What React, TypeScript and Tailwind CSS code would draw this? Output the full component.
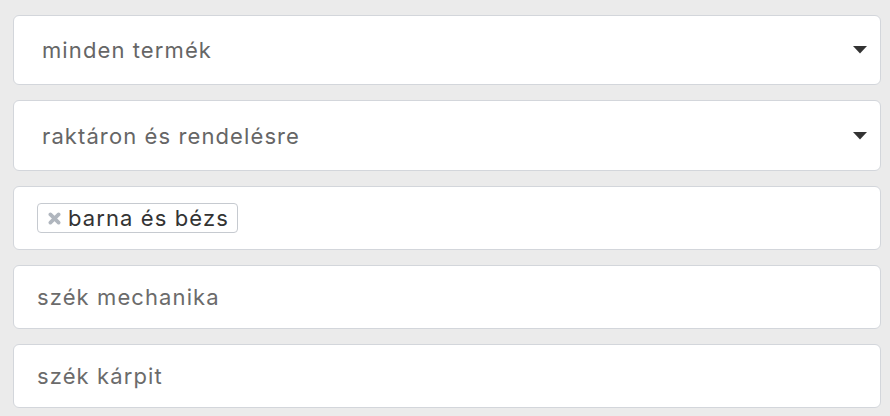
import React from "react";

function Caret() {
  return (
    <svg width="14" height="8" viewBox="0 0 14 8" className="shrink-0">
      <path d="M0 0 H14 L7 7.5 Z" fill="#333333" />
    </svg>
  );
}

function SelectBox({ label, h }: { label: string; h: string }) {
  return (
    <div
      className={`flex items-center justify-between rounded-[6px] border border-[#d3d6db] bg-white pl-[28px] pr-[13px] ${h}`}
    >
      <span className="text-[22px] leading-none tracking-[1.1px] text-[#666666]">{label}</span>
      <Caret />
    </div>
  );
}

function InputBox({ label }: { label: string }) {
  return (
    <div className="flex h-[64px] items-center rounded-[6px] border border-[#d3d6db] bg-white pl-[23px]">
      <span className="text-[22px] leading-none tracking-[1.1px] text-[#6b6b6b]">{label}</span>
    </div>
  );
}

export default function App() {
  return (
    <div
      className="min-h-[416px] w-full bg-[#ebebeb] pt-[15px] pl-[13px] pr-[9px]"
      style={{ fontFamily: "Inter, 'Noto Sans', sans-serif" }}
    >
      <div className="flex flex-col gap-[15px]">
        <SelectBox label="minden termék" h="h-[70px]" />
        <SelectBox label="raktáron és rendelésre" h="h-[71px]" />
        <div className="flex h-[64px] items-center rounded-[6px] border border-[#d3d6db] bg-white pl-[23px]">
          <span className="flex h-[30px] items-center gap-[7px] rounded-[4px] border border-[#c6cad0] bg-white pl-[10px] pr-[8px]">
            <svg width="13" height="13" viewBox="0 0 12 12">
              <path d="M2.2 2.2 L9.8 9.8 M9.8 2.2 L2.2 9.8" stroke="#b0b6be" strokeWidth="3.4" strokeLinecap="round" />
            </svg>
            <span className="text-[22px] leading-none tracking-[1.1px] text-[#333333]">barna és bézs</span>
          </span>
        </div>
        <InputBox label="szék mechanika" />
        <InputBox label="szék kárpit" />
      </div>
    </div>
  );
}
